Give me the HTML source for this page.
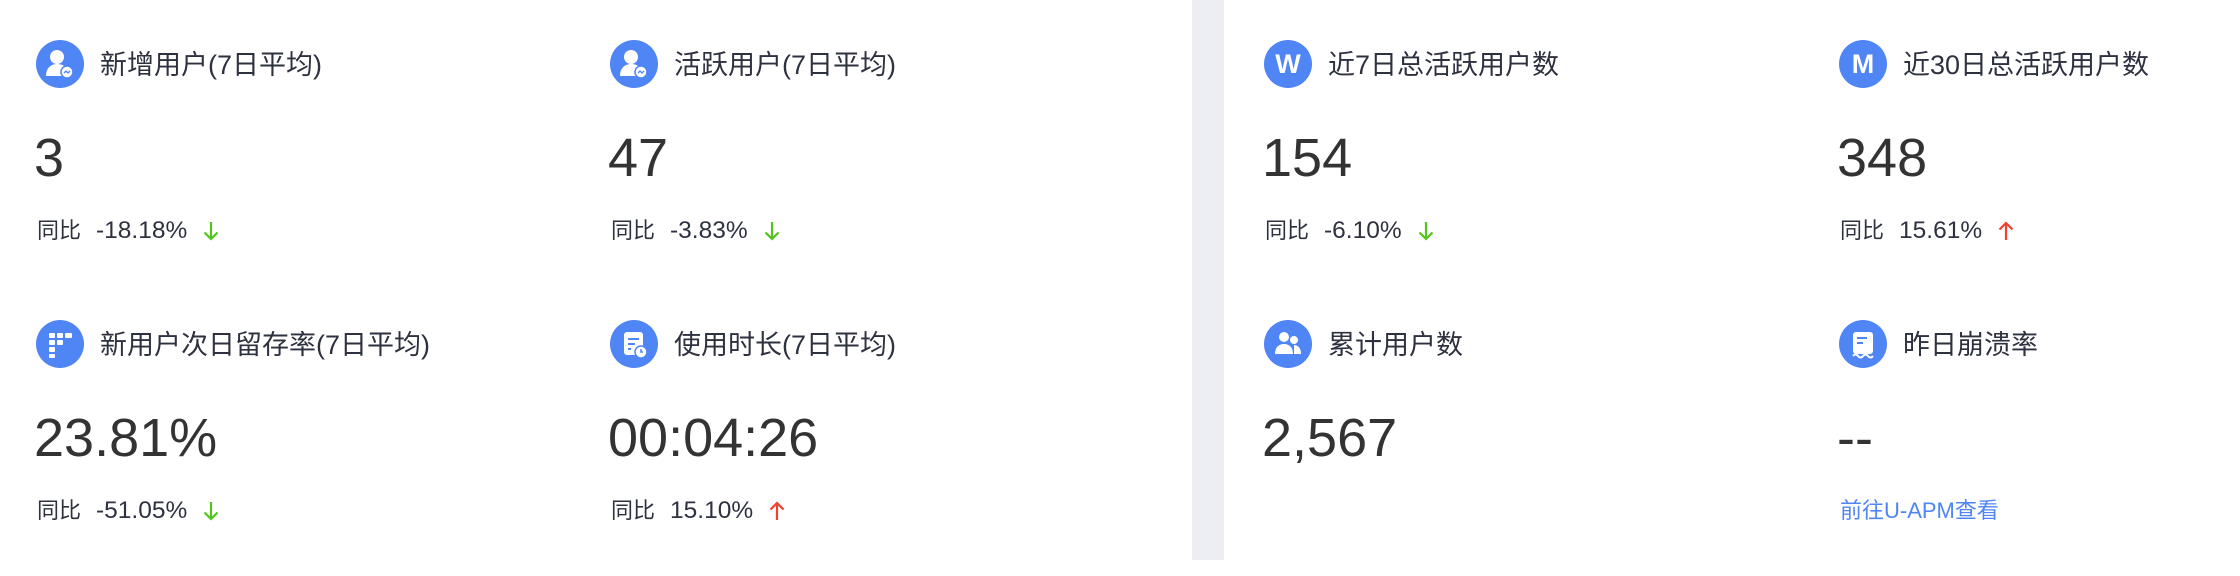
<!DOCTYPE html>
<html><head><meta charset="utf-8"><style>
*{margin:0;padding:0;box-sizing:border-box}
body{width:2240px;height:560px;background:#fff;position:relative;overflow:hidden;font-family:"Liberation Sans","Noto Sans CJK SC",sans-serif;color:#2e3140}
.sep{position:absolute;left:1192px;top:0;width:32px;height:560px;background:#eceef3}
.card{position:absolute;width:520px;height:260px}
.ic{position:absolute;left:0;top:4px;width:48px;height:48px;border-radius:50%;background:#4f85f5;color:#fff;font-weight:bold;font-size:27px;text-align:center;line-height:48px}
.ic svg{position:absolute;left:0;top:0}
.t{position:absolute;left:64px;top:12px;font-size:27px;line-height:34px;white-space:nowrap;color:#2e3140}
.n{position:absolute;left:-2px;top:92px;font-size:54px;line-height:60px;color:#333;white-space:nowrap}
.s{position:absolute;left:1px;top:180px;font-size:22px;line-height:30px;white-space:nowrap;color:#2e3140}
.s b{font-weight:normal;margin-left:15px;font-size:24.5px}
.s svg{margin-left:16px;vertical-align:-3px}
.lk{position:absolute;left:1px;top:180px;font-size:22px;line-height:30px;color:#4f85f5;white-space:nowrap}
</style></head><body>
<div class="sep"></div>

<div class="card" style="left:36px;top:36px">
<div class="ic"><svg width="48" height="48" viewBox="0 0 48 48"><circle cx="21" cy="17" r="7" fill="#fff"/><path d="M10 36c0-8 5-12 11-12s9 3 10 6v6z" fill="#fff"/><circle cx="31" cy="32" r="6" fill="#fff" stroke="#4f85f5" stroke-width="1.5"/><path d="M28 33l2-2 2 2 2-2" stroke="#4f85f5" stroke-width="1.3" fill="none"/></svg></div>
<div class="t">新增用户(7日平均)</div>
<div class="n">3</div>
<div class="s">同比<b>-18.18%</b><svg width="16" height="20" viewBox="0 0 16 20"><path d="M8 1v17M1.5 11.5L8 18l6.5-6.5" stroke="#52c41a" stroke-width="2.2" fill="none"/></svg></div>
</div>

<div class="card" style="left:610px;top:36px">
<div class="ic"><svg width="48" height="48" viewBox="0 0 48 48"><circle cx="21" cy="17" r="7" fill="#fff"/><path d="M10 36c0-8 5-12 11-12s9 3 10 6v6z" fill="#fff"/><circle cx="31" cy="32" r="6" fill="#fff" stroke="#4f85f5" stroke-width="1.5"/><path d="M28 33l2-2 2 2 2-2" stroke="#4f85f5" stroke-width="1.3" fill="none"/></svg></div>
<div class="t">活跃用户(7日平均)</div>
<div class="n">47</div>
<div class="s">同比<b>-3.83%</b><svg width="16" height="20" viewBox="0 0 16 20"><path d="M8 1v17M1.5 11.5L8 18l6.5-6.5" stroke="#52c41a" stroke-width="2.2" fill="none"/></svg></div>
</div>

<div class="card" style="left:1264px;top:36px">
<div class="ic">W</div>
<div class="t">近7日总活跃用户数</div>
<div class="n">154</div>
<div class="s">同比<b>-6.10%</b><svg width="16" height="20" viewBox="0 0 16 20"><path d="M8 1v17M1.5 11.5L8 18l6.5-6.5" stroke="#52c41a" stroke-width="2.2" fill="none"/></svg></div>
</div>

<div class="card" style="left:1839px;top:36px">
<div class="ic">M</div>
<div class="t">近30日总活跃用户数</div>
<div class="n">348</div>
<div class="s">同比<b>15.61%</b><svg width="16" height="20" viewBox="0 0 16 20"><path d="M8 19V2M1.5 8.5L8 2l6.5 6.5" stroke="#f0412f" stroke-width="2.2" fill="none"/></svg></div>
</div>

<div class="card" style="left:36px;top:316px">
<div class="ic"><svg width="48" height="48" viewBox="0 0 48 48" fill="#fff"><rect x="13" y="13" width="6" height="5" rx="1"/><rect x="21" y="13" width="6" height="5" rx="1"/><rect x="29" y="13" width="7" height="5" rx="1"/><rect x="13" y="20" width="6" height="5" rx="1"/><rect x="21" y="20" width="6" height="5" rx="1"/><rect x="13" y="27" width="6" height="5" rx="1"/><rect x="13" y="34" width="6" height="4" rx="1"/></svg></div>
<div class="t">新用户次日留存率(7日平均)</div>
<div class="n">23.81%</div>
<div class="s">同比<b>-51.05%</b><svg width="16" height="20" viewBox="0 0 16 20"><path d="M8 1v17M1.5 11.5L8 18l6.5-6.5" stroke="#52c41a" stroke-width="2.2" fill="none"/></svg></div>
</div>

<div class="card" style="left:610px;top:316px">
<div class="ic"><svg width="48" height="48" viewBox="0 0 48 48"><rect x="14" y="12" width="19" height="23" rx="3" fill="#fff"/><path d="M18 19h11M18 24h7M18 29h3" stroke="#4f85f5" stroke-width="2"/><circle cx="31" cy="32" r="6" fill="#fff" stroke="#4f85f5" stroke-width="1.5"/><path d="M31 29v3h2" stroke="#4f85f5" stroke-width="1.5" fill="none"/></svg></div>
<div class="t">使用时长(7日平均)</div>
<div class="n">00:04:26</div>
<div class="s">同比<b>15.10%</b><svg width="16" height="20" viewBox="0 0 16 20"><path d="M8 19V2M1.5 8.5L8 2l6.5 6.5" stroke="#f0412f" stroke-width="2.2" fill="none"/></svg></div>
</div>

<div class="card" style="left:1264px;top:316px">
<div class="ic"><svg width="48" height="48" viewBox="0 0 48 48" fill="#fff"><circle cx="20" cy="17" r="5"/><path d="M11 34c0-7 4-10 9-10s9 3 9 10z"/><circle cx="30" cy="20" r="4"/><path d="M30 34h7c0-6-3-9-7-9z"/></svg></div>
<div class="t">累计用户数</div>
<div class="n">2,567</div>
</div>

<div class="card" style="left:1839px;top:316px">
<div class="ic"><svg width="48" height="48" viewBox="0 0 48 48"><rect x="14" y="12" width="20" height="22" rx="3" fill="#fff"/><path d="M18 18h10M18 23h6" stroke="#4f85f5" stroke-width="2"/><path d="M14 36q2.5-3 5 0t5 0 5 0 5 0" stroke="#fff" stroke-width="2" fill="none"/></svg></div>
<div class="t">昨日崩溃率</div>
<div class="n">--</div>
<div class="lk">前往U-APM查看</div>
</div>
</body></html>
